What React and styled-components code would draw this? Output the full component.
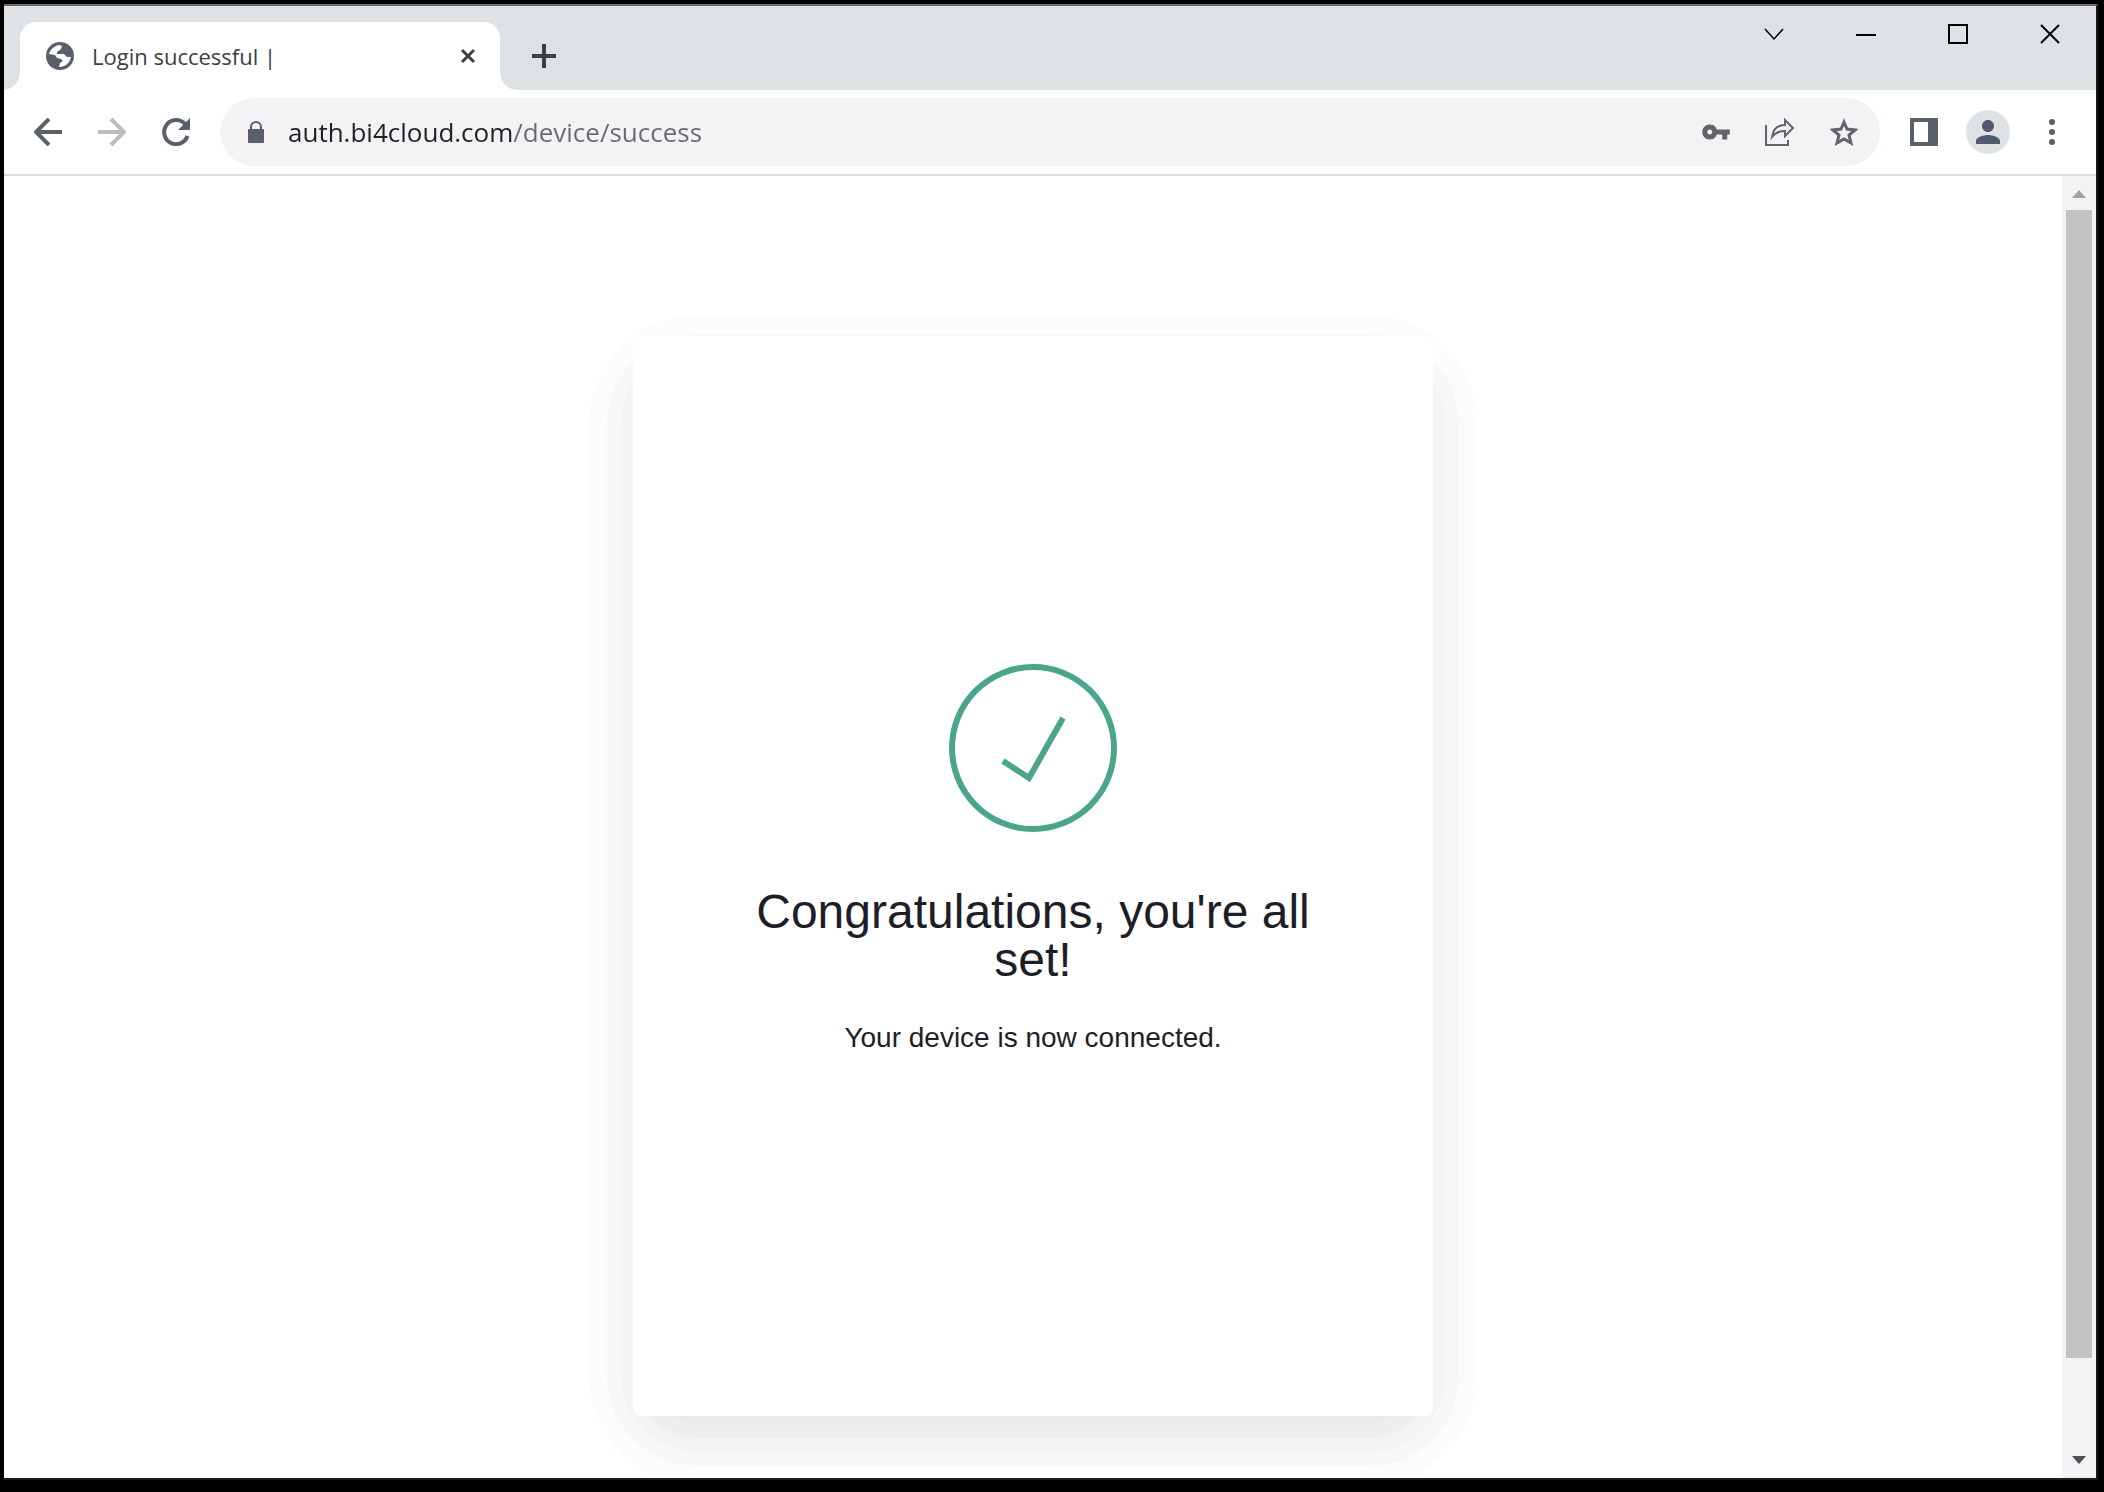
import React, { useState } from 'react';
import styled, { createGlobalStyle } from 'styled-components';
import { MdVpnKey, MdPerson } from 'react-icons/md';

const App = () => {
    const [url, setUrl] = useState('auth.bi4cloud.com/device/success')

    return (
        <>
            <GlobalStyle />
            <Window>
                <TitleBar>
                    <Tab>
                        <Favicon viewBox="0 0 28 28">
                            <circle cx="14" cy="14" r="14" />
                            <path d="M13 3l3 1-1 3-4 3v2h7l3 3h4c-1 6-6 10-12 10l1-4 3-2-2-2-4-1-2-3-6-1C4 9 7 4 13 3z" />
                        </Favicon>
                        <TabTitle>Login successful |</TabTitle>
                        <CloseTab aria-label="Close tab">
                            <Glyph viewBox="0 0 16 16" size={16} weight={3}>
                                <path d="M2 2l12 12M14 2L2 14" />
                            </Glyph>
                        </CloseTab>
                    </Tab>
                    <NewTab aria-label="New tab">
                        <Glyph viewBox="0 0 24 24" size={24} weight={4}>
                            <path d="M12 0v24M0 12h24" />
                        </Glyph>
                    </NewTab>
                    <WindowControls>
                        <WindowButton aria-label="Search tabs">
                            <Glyph viewBox="0 0 20 20" size={20} weight={1.5}>
                                <path d="M1 5l9 10 9-10" />
                            </Glyph>
                        </WindowButton>
                        <WindowButton aria-label="Minimize">
                            <Glyph viewBox="0 0 20 20" size={20} weight={2}>
                                <path d="M0 11h20" />
                            </Glyph>
                        </WindowButton>
                        <WindowButton aria-label="Maximize">
                            <Glyph viewBox="0 0 20 20" size={20} weight={2}>
                                <path d="M1 1h18v18H1z" />
                            </Glyph>
                        </WindowButton>
                        <WindowButton aria-label="Close">
                            <Glyph viewBox="0 0 20 20" size={20} weight={2}>
                                <path d="M1 1l18 18M19 1L1 19" />
                            </Glyph>
                        </WindowButton>
                    </WindowControls>
                </TitleBar>

                <Toolbar>
                    <ToolButton aria-label="Back">
                        <Glyph viewBox="0 0 28 28" size={28} weight={4}>
                            <path d="M28 14H3M15 1L2 14l13 13" />
                        </Glyph>
                    </ToolButton>
                    <ToolButton aria-label="Forward" disabled>
                        <Glyph viewBox="0 0 28 28" size={28} weight={4}>
                            <path d="M0 14h25M13 1l13 13-13 13" />
                        </Glyph>
                    </ToolButton>
                    <ToolButton aria-label="Reload">
                        <Glyph viewBox="0 0 28 28" size={28} weight={4}>
                            <path d="M25.500 18A12 12 0 1 1 23 6" />
                            <path d="M28 0v12H16z" fill="currentColor" stroke="none" />
                        </Glyph>
                    </ToolButton>
                    <Omnibox>
                        <Glyph viewBox="0 0 16 22" size={16} weight={2}>
                            <path d="M3 9V6a5 5 0 0 1 10 0v3" />
                            <rect y="8" width="16" height="14" rx="1" fill="currentColor" stroke="none" />
                        </Glyph>
                        <Address
                            aria-label="Address"
                            spellCheck={false}
                            value={url}
                            onChange={evt => setUrl(evt.target.value)}
                        />
                        <PageAction aria-label="Passwords">
                            <MdVpnKey size={30} />
                        </PageAction>
                        <PageAction aria-label="Share">
                            <Glyph viewBox="0 0 30 28" size={30} weight={2}>
                                <path d="M1 7v20h22v-5M7 19c1-8 5-12 13-12V2l8 8-8 8v-5c-6 0-10 2-13 6z" />
                            </Glyph>
                        </PageAction>
                        <PageAction aria-label="Bookmark">
                            <Glyph viewBox="0 0 28 28" size={28} weight={3}>
                                <path d="M14 4l3 7 8 1-6 5 2 8-7-4-7 4 2-8-6-5 8-1z" />
                            </Glyph>
                        </PageAction>
                    </Omnibox>
                    <ToolButton aria-label="Side panel">
                        <Glyph viewBox="0 0 28 28" size={28} weight={4}>
                            <path d="M2 2h24v24H2zM20 2v24M23 2v24" />
                        </Glyph>
                    </ToolButton>
                    <ToolButton aria-label="Profile">
                        <Avatar>
                            <MdPerson size={36} />
                        </Avatar>
                    </ToolButton>
                    <ToolButton aria-label="Menu">
                        <Dots viewBox="0 0 6 26">
                            <circle cx="3" cy="3" r="3" />
                            <circle cx="3" cy="13" r="3" />
                            <circle cx="3" cy="23" r="3" />
                        </Dots>
                    </ToolButton>
                </Toolbar>

                <Viewport>
                    <Page>
                        <Card>
                            <SuccessMark viewBox="0 0 168 168">
                                <circle cx="84" cy="84" r="81" />
                                <path d="M54 97l26 17 34-60" />
                            </SuccessMark>
                            <Heading>Congratulations, you're all set!</Heading>
                            <Message>Your device is now connected.</Message>
                        </Card>
                    </Page>
                    <ScrollBar>
                        <Arrow viewBox="0 0 14 8" color="#a3a1a3">
                            <path d="M7 0l7 8H0z" />
                        </Arrow>
                        <Track>
                            <Thumb />
                        </Track>
                        <Arrow viewBox="0 0 14 8" color="#504e52">
                            <path d="M0 0h14L7 8z" />
                        </Arrow>
                    </ScrollBar>
                </Viewport>
            </Window>
        </>
    );
}

export default App;

// Styling
const GlobalStyle = createGlobalStyle`
    * {
        box-sizing: border-box;
    }
    body {
        margin: 0;
        background: #000;
        font-family: "Liberation Sans", Arial, sans-serif;
    }
    button {
        display: flex;
        align-items: center;
        justify-content: center;
        padding: 0;
        border: 0;
        background: none;
        color: inherit;
    }
    svg {
        flex: none;
    }
    #root {
        height: 100vh;
        padding: 4px 6px 12px 4px;
    }
`

const Window = styled.div`
    display: flex;
    flex-direction: column;
    height: 100%;
    border: 0 solid #1b1a1c;
    border-width: 2px 2px 2px 0;
    border-top-color: #6b696f;
    background: #fff;
    color: #5a606a;
`

const TitleBar = styled.header`
    display: flex;
    align-items: flex-end;
    height: 84px;
    padding-left: 16px;
    background: #dee2e5;
    color: #3c4043;
`
const Tab = styled.div`
    position: relative;
    display: flex;
    align-items: center;
    width: 480px;
    height: 68px;
    padding: 0 24px 0 26px;
    border-radius: 16px 16px 0 0;
    background: #fff;
    &::before,
    &::after {
        content: '';
        position: absolute;
        bottom: 0;
        width: 16px;
        height: 16px;
    }
    &::before {
        right: 100%;
        background: radial-gradient(circle at 0 0, transparent 15px, #fff 16px);
    }
    &::after {
        left: 100%;
        background: radial-gradient(circle at 100% 0, transparent 15px, #fff 16px);
    }
`
const Favicon = styled.svg`
    width: 28px;
    height: 28px;
    fill: #5a606a;
    path {
        fill: #fff;
    }
`
const TabTitle = styled.span`
    flex: 1;
    margin-left: 18px;
    font-family: "Open Sans", sans-serif;
    font-size: 22px;
`
const CloseTab = styled.button`
    height: 32px;
`
const NewTab = styled.button`
    height: 68px;
    margin-left: 32px;
`
const Glyph = styled.svg`
    width: ${props => props.size}px;
    fill: none;
    stroke: currentColor;
    stroke-width: ${props => props.weight};
`

const WindowControls = styled.div`
    display: flex;
    align-self: flex-start;
    margin-left: auto;
    color: #000;
`
const WindowButton = styled.button`
    width: 92px;
    height: 56px;
`

const Toolbar = styled.nav`
    display: flex;
    align-items: center;
    height: 86px;
    padding: 0 12px;
    border-bottom: 2px solid #dedddf;
`
const ToolButton = styled.button`
    flex: none;
    width: 64px;
    height: 64px;
    &:disabled {
        color: #bdbbbd;
    }
`
const PageAction = styled(ToolButton)`
    color: #656367;
`
const Omnibox = styled.div`
    display: flex;
    flex: 1;
    align-items: center;
    height: 68px;
    margin: 0 12px;
    padding: 0 4px 0 28px;
    border-radius: 34px;
    background: #f4f2f5;
`
// the host part is darker than the path after it
const Address = styled.input`
    flex: 1;
    min-width: 0;
    margin-left: 24px;
    padding: 0;
    border: 0;
    outline: 0;
    background: linear-gradient(90deg, #202124 224px, #6b696f 224px);
    background-clip: text;
    -webkit-text-fill-color: transparent;
    color: #202124;
    font-family: "Open Sans", sans-serif;
    font-size: 26px;
`
const Avatar = styled.span`
    display: flex;
    align-items: center;
    justify-content: center;
    width: 44px;
    height: 44px;
    border-radius: 50%;
    background: #dee2e5;
    color: #515a70;
`
const Dots = styled.svg`
    width: 6px;
    height: 26px;
    fill: currentColor;
`

const Viewport = styled.div`
    display: flex;
    flex: 1;
    min-height: 0;
`
const Page = styled.main`
    position: relative;
    z-index: 0;
    flex: 1;
    padding-top: 160px;
    overflow: hidden;
`
const Card = styled.section`
    position: relative;
    display: flex;
    flex-direction: column;
    align-items: center;
    width: 800px;
    min-height: 1080px;
    margin: 0 auto;
    padding: 328px 100px 0;
    border-radius: 8px;
    color: #1e1e28;
    text-align: center;
    /* stepped shadow around the card */
    &::before {
        content: '';
        position: absolute;
        z-index: -1;
        inset: 40px 16px -8px;
        border-radius: 48px;
        background: #ebe9eb;
        box-shadow:
            0 0 0 14px #eeeeee,
            0 0 0 28px #f4f2f5,
            0 0 0 42px #f6f7f6,
            0 0 0 60px #fdfbfe;
    }
    &::after {
        content: '';
        position: absolute;
        z-index: -1;
        inset: 0;
        border-radius: 8px;
        background: #fff;
    }
`
const SuccessMark = styled.svg`
    width: 168px;
    height: 168px;
    fill: none;
    stroke: #4aa58c;
    stroke-width: 6;
`
const Heading = styled.h1`
    margin: 56px 0 32px;
    font-weight: 400;
    font-size: 48px;
    line-height: 48px;
`
const Message = styled.p`
    margin: 0;
    font-size: 28px;
    line-height: 44px;
`

const ScrollBar = styled.div`
    display: flex;
    flex-direction: column;
    align-items: center;
    width: 34px;
    padding: 14px 0;
    background: #f4f2f5;
`
const Arrow = styled.svg`
    width: 14px;
    height: 8px;
    fill: ${props => props.color};
`
const Track = styled.div`
    flex: 1;
    width: 26px;
    margin: 12px 0;
`
const Thumb = styled.div`
    height: 93%;
    background: #c4c2c5;
`
